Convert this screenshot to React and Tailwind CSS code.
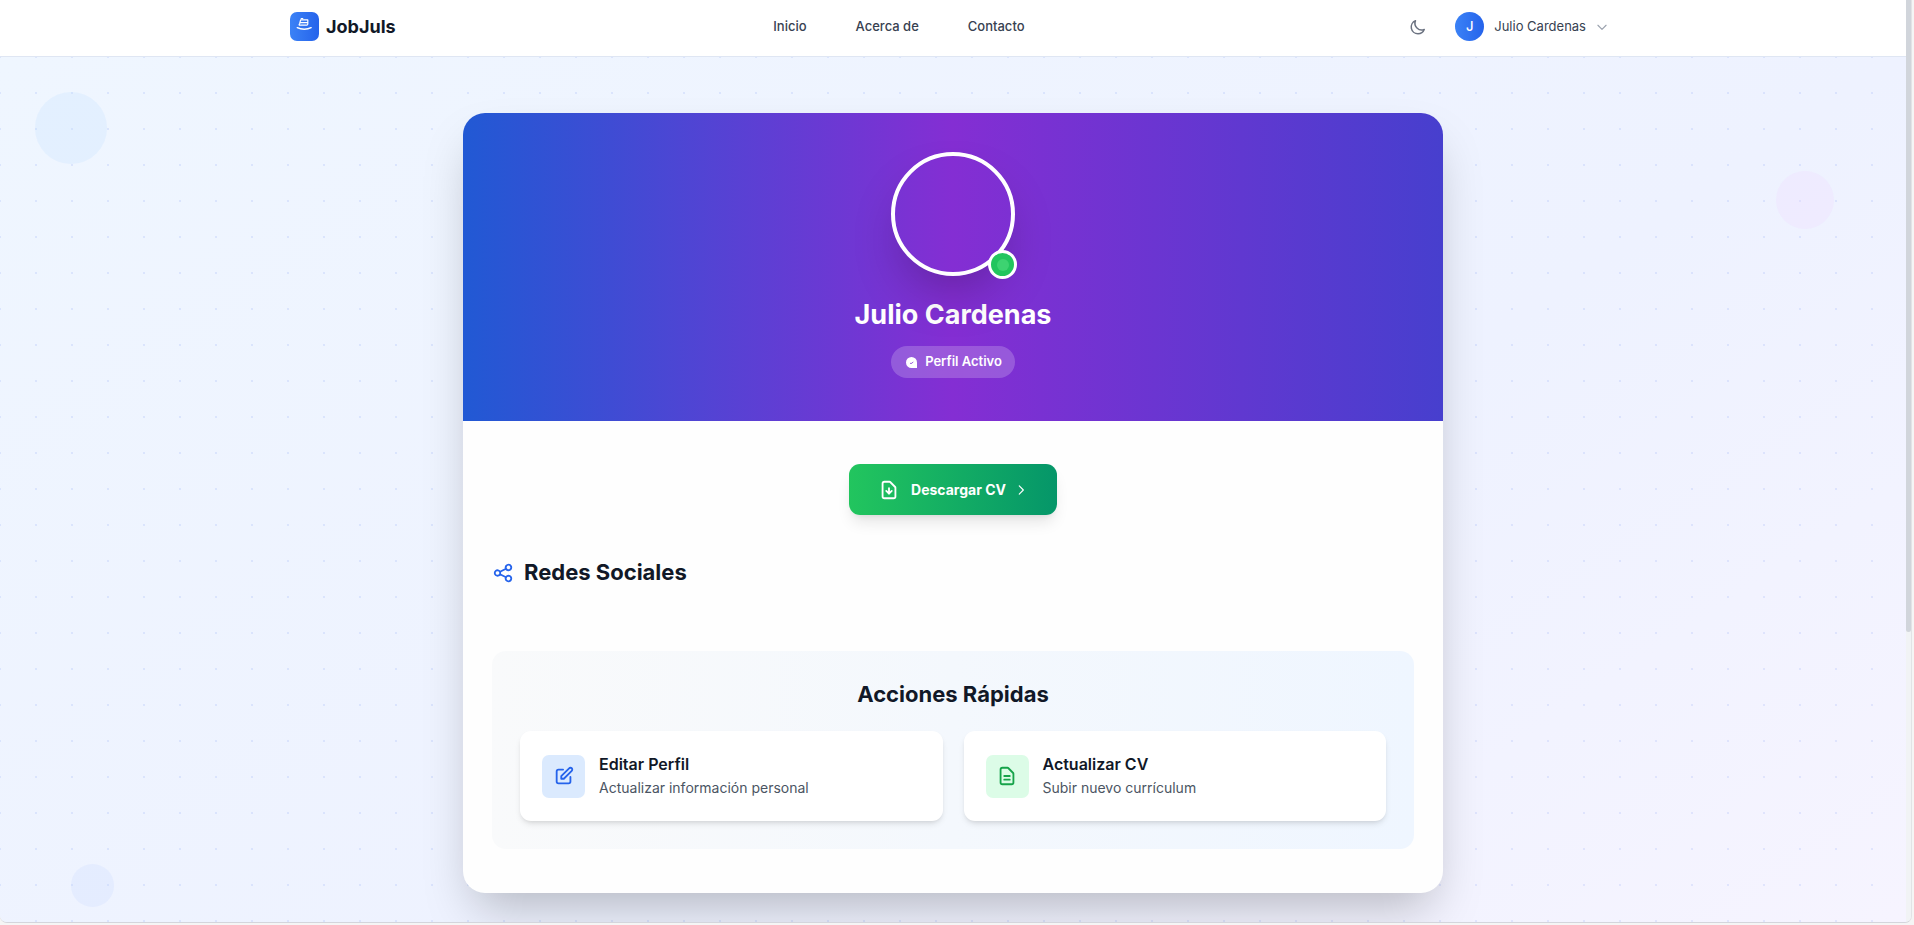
import React from "react";

const navLinks = ["Inicio", "Acerca de", "Contacto"];

function Outline({ className, strokeWidth = 2, children }) {
  return (
    <svg
      className={className}
      viewBox="0 0 24 24"
      fill="none"
      stroke="currentColor"
      strokeWidth={strokeWidth}
      strokeLinecap="round"
      strokeLinejoin="round"
      aria-hidden="true"
    >
      {children}
    </svg>
  );
}

function LogoMark() {
  return (
    <svg
      className="size-[29px]"
      viewBox="0 0 29 29"
      fill="none"
      stroke="white"
      strokeLinecap="round"
      strokeLinejoin="round"
      aria-hidden="true"
    >
      <path d="M11.300 6.600h1.400" strokeWidth="1.400" />
      <path d="M10.600 7.900h7.200v4.200q0 1.100-1.200 1.100H9.300q-.6-1 .4-1.700zM10.400 10.600h6.800" strokeWidth="1.200" />
      <path d="M7.300 15.700c4 2 10 2 13.800 0" strokeWidth="1.500" />
    </svg>
  );
}

function Header() {
  return (
    <header className="border-b border-[#dfe6f3] bg-white shadow-sm">
      <div className="mx-auto flex h-14 max-w-[1382px] items-center justify-between px-7 pb-[3px]">
        <a href="#inicio" className="flex items-center gap-[7px]">
          <span className="rounded-[7px] bg-linear-to-r/srgb from-[#3b82f6] to-[#2563eb]">
            <LogoMark />
          </span>
          <span className="text-lg font-bold text-[#111827]">JobJuls</span>
        </a>
        <nav className="flex items-center gap-[49px]">
          {navLinks.map((label) => (
            <a key={label} href={"#" + label} className="text-[13px] font-medium text-[#374151]">
              {label}
            </a>
          ))}
        </nav>
        <div className="flex items-center gap-[14px]">
          <button type="button" aria-label="Modo oscuro" className="p-[7px] text-[#6b7280]">
            <Outline className="size-[18px]">
              <path d="M20.354 15.354A9 9 0 018.646 3.646 9.003 9.003 0 0012 21a9.003 9.003 0 008.354-5.646z" />
            </Outline>
          </button>
          <button type="button" className="flex items-center p-[7px]">
            <span className="flex size-[29px] items-center justify-center rounded-full bg-linear-to-r/srgb from-[#3b82f6] to-[#2563eb] text-[13px] font-medium text-white">
              J
            </span>
            <span className="ml-[10px] text-[13px] text-[#374151]">Julio Cardenas</span>
            <Outline className="ml-[9px] size-[14px] text-[#9ca3af]">
              <path d="M19 9l-7 7-7-7" />
            </Outline>
          </button>
        </div>
      </div>
    </header>
  );
}

function ProfileHero() {
  return (
    <div className="flex flex-col items-center bg-linear-to-r/srgb from-[#2159d4] via-[#842ed3] to-[#473fce] pt-[39px] pb-[43px]">
      <div className="relative size-[124px] rounded-full border-4 border-white shadow-2xl">
        <span className="absolute -right-[6px] -bottom-[7px] flex size-[29px] items-center justify-center rounded-full border-3 border-white bg-[#22c55e]">
          <span className="size-3 rounded-full bg-[#3dd371]" />
        </span>
      </div>
      <h1 className="mt-[23px] text-[27px] leading-8 font-bold text-white">Julio Cardenas</h1>
      <div className="mt-[15px] flex h-8 items-center gap-[7px] rounded-full bg-white/20 px-[13px] text-[13px] font-semibold text-white">
        <svg className="size-[14px]" viewBox="0 0 14 14" aria-hidden="true">
          <path d="M7.500 2a5.500 5.500 0 015.500 5.500V13H7.500a5.500 5.500 0 010-11z" fill="currentColor" />
          <path d="M6 8l1 .7L9.300 7" fill="none" stroke="#9b5bdb" strokeWidth="1" />
        </svg>
        Perfil Activo
      </div>
    </div>
  );
}

function ActionCard({ title, text, tone, children }) {
  return (
    <a href="#perfil" className="flex items-center gap-[14px] rounded-[11px] bg-white px-[22px] py-[21px] shadow-md">
      <span className={"flex size-[43px] items-center justify-center rounded-[7px] " + tone}>{children}</span>
      <span className="flex flex-col">
        <span className="text-base font-semibold text-[#111827]">{title}</span>
        <span className="text-sm leading-6 text-[#4b5563]">{text}</span>
      </span>
    </a>
  );
}

export default function App() {
  return (
    <div className="h-screen overflow-hidden bg-[#f5f5f5] pr-[2px] pb-[2px] font-['Inter',sans-serif]">
      <div className="flex h-full overflow-hidden rounded-b-[7px] border-r border-b border-r-[#e2e3e6] border-b-[#d4d5dc]">
        <div className="min-w-0 flex-1">
          <Header />
          <main className="relative z-0 h-[1288px] bg-linear-to-br/srgb from-[#eff6ff] via-[#eef2ff] to-[#faf5ff] px-4 pt-14">
            <div className="absolute inset-0 bg-[radial-gradient(circle,rgba(99,132,241,0.14)_1px,transparent_1px)] bg-size-[36px_36px] bg-position-[-18px_-18px]" />
            <div className="absolute top-[35px] left-[35px] size-[72px] rounded-full bg-[#bfe0fe]/25" />
            <div className="absolute top-[114px] right-[72px] size-[58px] rounded-full bg-[#f0dcff]/30" />
            <div className="absolute top-[807px] left-[71px] size-[43px] rounded-full bg-[#c7d6fe]/25" />

            <section className="relative mx-auto max-w-[980px] overflow-hidden rounded-[22px] bg-[#fefefe] shadow-2xl">
              <ProfileHero />
              <div className="px-[29px] pt-[43px] pb-11">
                <div className="flex justify-center">
                  <button
                    type="button"
                    className="flex h-[51px] items-center rounded-[11px] bg-linear-to-r/srgb from-[#22c55e] to-[#059669] px-[29px] font-bold text-white shadow-lg"
                  >
                    <Outline className="size-[22px]">
                      <path d="M12 10v6m0 0l-3-3m3 3l3-3m2 8H7a2 2 0 01-2-2V5a2 2 0 012-2h5.586a1 1 0 01.707.293l5.414 5.414a1 1 0 01.293.707V19a2 2 0 01-2 2z" />
                    </Outline>
                    <span className="ml-[11px] text-sm">Descargar CV</span>
                    <Outline className="ml-2 size-[14px]">
                      <path d="M9 5l7 7-7 7" />
                    </Outline>
                  </button>
                </div>

                <h2 className="mt-[43px] flex items-center gap-[10px] text-[22px] leading-[29px] font-bold text-[#111827]">
                  <Outline className="size-[22px] text-[#2563eb]">
                    <path d="M8.684 13.342C8.886 12.938 9 12.482 9 12c0-.482-.114-.938-.316-1.342m0 2.684a3 3 0 110-2.684m0 2.684l6.632 3.316m-6.632-6l6.632-3.316m0 0a3 3 0 105.367-2.684 3 3 0 00-5.367 2.684zm0 9.316a3 3 0 105.368 2.684 3 3 0 00-5.368-2.684z" />
                  </Outline>
                  Redes Sociales
                </h2>

                <div className="mt-16 rounded-[14px] bg-linear-to-r/srgb from-[#f9fafb] to-[#eff6ff] p-7">
                  <h2 className="text-center text-[22px] leading-[30px] font-bold text-[#111827]">Acciones Rápidas</h2>
                  <div className="mt-[22px] grid grid-cols-2 gap-[21px]">
                    <ActionCard title="Editar Perfil" text="Actualizar información personal" tone="bg-[#dbeafe] text-[#2563eb]">
                      <Outline className="size-[22px]">
                        <path d="M11 5H6a2 2 0 00-2 2v11a2 2 0 002 2h11a2 2 0 002-2v-5m-1.414-9.414a2 2 0 112.828 2.828L11.828 15H9v-2.828l8.586-8.586z" />
                      </Outline>
                    </ActionCard>
                    <ActionCard title="Actualizar CV" text="Subir nuevo currículum" tone="bg-[#dcfce7] text-[#16a34a]">
                      <Outline className="size-[22px]">
                        <path d="M9 12h6m-6 4h6m2 5H7a2 2 0 01-2-2V5a2 2 0 012-2h5.586a1 1 0 01.707.293l5.414 5.414a1 1 0 01.293.707V19a2 2 0 01-2 2z" />
                      </Outline>
                    </ActionCard>
                  </div>
                </div>
              </div>
            </section>
          </main>
        </div>
        <div className="w-[5px] shrink-0 bg-[#f1f3f5]" aria-hidden="true">
          <div className="h-[68.5%] rounded-b-[3px] bg-[#d1d5db]" />
        </div>
      </div>
    </div>
  );
}
